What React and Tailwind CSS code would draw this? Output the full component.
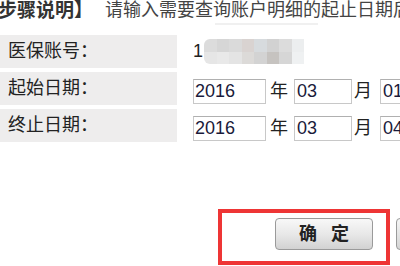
export default function App() {
  const cjk = { fontFamily: '"Liberation Sans", "Noto Sans CJK SC", sans-serif' };
  const rows = [
    { label: '医保账号：', kind: 'account' },
    { label: '起始日期：', kind: 'date', y: '2016', m: '03', d: '01' },
    { label: '终止日期：', kind: 'date', y: '2016', m: '03', d: '04' },
  ];
  const mosaic = [
    ['#dcdcdc', '#d6d6d6', '#dadada', '#d9d3d1', '#d7dbde', '#d2d2d2', '#dcdcdc', '#eceeef'],
    ['#e6e6e6', '#e9e9e9', '#e4e4e4', '#dcdad8', '#d3d3d3', '#c6c3c0', '#d6d6d6', '#eff1f2'],
  ];

  return (
    <div className="w-[400px] h-[266px] overflow-hidden bg-white text-[#222]" style={cjk}>
      <div className="h-[20px] overflow-hidden whitespace-nowrap flex items-end -ml-[2px]">
        <span className="text-[19px] font-bold text-[#333] leading-[19px]">步骤说明】</span>
        <span className="text-[18px] text-[#444] leading-[19px] ml-[12px]">请输入需要查询账户明细的起止日期后</span>
      </div>
      <div className="h-[15px] flex items-start">
        <div className="ml-[215px] mt-[3px] w-[103px] h-[2px] bg-[#f0f0f0]" />
      </div>
      <div className="flex flex-col gap-[4px]">
        {rows.map((r) => (
          <div key={r.label} className="flex h-[33px]">
            <div className="w-[177px] shrink-0 bg-[#eeeded] flex items-center pl-[8px] text-[18px] text-[#222]">
              {r.label}
            </div>
            <div className="flex items-center pl-[16px] whitespace-nowrap text-[18px]">
              {r.kind === 'account' ? (
                <>
                  <span className="text-[#222] mr-[1px]">1</span>
                  <div className="flex flex-col rounded-l-[6px] overflow-hidden">
                    {mosaic.map((line, i) => (
                      <div key={i} className="flex">
                        {line.map((c, j) => (
                          <div key={j} className="w-[12.5px] h-[12.5px]" style={{ background: c }} />
                        ))}
                      </div>
                    ))}
                  </div>
                </>
              ) : (
                <div className="flex items-center mt-[5px]">
                  <div className="w-[73px] h-[25px] border border-[#c8c8c8] border-t-[#b0b0b0] flex items-center pl-[1px] text-[#1a1a3a]">
                    {r.y}
                  </div>
                  <span className="ml-[4px] mr-[6px] text-[#222]">年</span>
                  <div className="w-[58px] h-[25px] border border-[#c8c8c8] border-t-[#b0b0b0] flex items-center pl-[2px] text-[#1a1a3a]">
                    {r.m}
                  </div>
                  <span className="ml-[2px] mr-[8px] text-[#222]">月</span>
                  <div className="w-[58px] h-[25px] border border-[#c8c8c8] border-t-[#b0b0b0] flex items-center pl-[2px] text-[#1a1a3a]">
                    {r.d}
                  </div>
                </div>
              )}
            </div>
          </div>
        ))}
      </div>
      <div className="flex mt-[67px]">
        <div className="ml-[218px] w-[172px] h-[56px] border-[4px] border-[#ee3535] flex items-start pt-[5px] pl-[53px] shrink-0">
          <button className="w-[98px] h-[32px] rounded-[4px] border border-[#9a9a9a] bg-gradient-to-b from-[#f8f8f8] via-[#e8e8e8] to-[#d2d2d2] text-[18px] font-bold text-[#222] tracking-[14px] pl-[14px]">
            确定
          </button>
        </div>
        <div className="ml-[6px] mt-[9px] w-[20px] h-[32px] rounded-[4px] border border-[#9a9a9a] bg-gradient-to-b from-[#f6f6f6] to-[#d4d4d4] shrink-0" />
      </div>
    </div>
  );
}
